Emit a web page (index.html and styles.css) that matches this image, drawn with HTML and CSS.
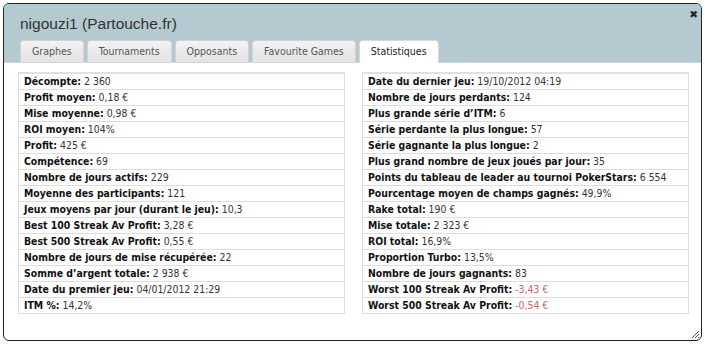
FILE: index.html
```html
<!DOCTYPE html>
<html>
<head>
<meta charset="utf-8">
<link rel="stylesheet" href="styles.css">
</head>
<body>
<div class="dialog">
  <div class="header">
    <div class="titlebar">
      <span class="title">nigouzi1 (Partouche.fr)</span>
      <span class="close">✖</span>
    </div>
    <ul class="tabs">
      <li class="tab">Graphes</li>
      <li class="tab">Tournaments</li>
      <li class="tab">Opposants</li>
      <li class="tab">Favourite Games</li>
      <li class="tab active">Statistiques</li>
    </ul>
  </div>
  <div class="panel">
    <table class="stats">
      <tr><td><b>Décompte:</b> 2 360</td></tr>
      <tr><td><b>Profit moyen:</b> 0,18 €</td></tr>
      <tr><td><b>Mise moyenne:</b> 0,98 €</td></tr>
      <tr><td><b>ROI moyen:</b> 104%</td></tr>
      <tr><td><b>Profit:</b> 425 €</td></tr>
      <tr><td><b>Compétence:</b> 69</td></tr>
      <tr><td><b>Nombre de jours actifs:</b> 229</td></tr>
      <tr><td><b>Moyenne des participants:</b> 121</td></tr>
      <tr><td><b>Jeux moyens par jour (durant le jeu):</b> 10,3</td></tr>
      <tr><td><b>Best 100 Streak Av Profit:</b> 3,28 €</td></tr>
      <tr><td><b>Best 500 Streak Av Profit:</b> 0,55 €</td></tr>
      <tr><td><b>Nombre de jours de mise récupérée:</b> 22</td></tr>
      <tr><td><b>Somme d’argent totale:</b> 2 938 €</td></tr>
      <tr><td><b>Date du premier jeu:</b> 04/01/2012 21:29</td></tr>
      <tr><td><b>ITM %:</b> 14,2%</td></tr>
    </table>
    <table class="stats">
      <tr><td><b>Date du dernier jeu:</b> 19/10/2012 04:19</td></tr>
      <tr><td><b>Nombre de jours perdants:</b> 124</td></tr>
      <tr><td><b>Plus grande série d’ITM:</b> 6</td></tr>
      <tr><td><b>Série perdante la plus longue:</b> 57</td></tr>
      <tr><td><b>Série gagnante la plus longue:</b> 2</td></tr>
      <tr><td><b>Plus grand nombre de jeux joués par jour:</b> 35</td></tr>
      <tr><td><b>Points du tableau de leader au tournoi PokerStars:</b> 6 554</td></tr>
      <tr><td><b>Pourcentage moyen de champs gagnés:</b> 49,9%</td></tr>
      <tr><td><b>Rake total:</b> 190 €</td></tr>
      <tr><td><b>Mise totale:</b> 2 323 €</td></tr>
      <tr><td><b>ROI total:</b> 16,9%</td></tr>
      <tr><td><b>Proportion Turbo:</b> 13,5%</td></tr>
      <tr><td><b>Nombre de jours gagnants:</b> 83</td></tr>
      <tr><td><b>Worst 100 Streak Av Profit:</b> <span class="neg">-3,43 €</span></td></tr>
      <tr><td><b>Worst 500 Streak Av Profit:</b> <span class="neg">-0,54 €</span></td></tr>
    </table>
  </div>
  <svg class="resize" width="9" height="9" viewBox="0 0 9 9">
    <path d="M8 1 L1 8 M8 4 L4 8 M8 7 L7 8" stroke="#555" stroke-width="1"/>
  </svg>
</div>
</body>
</html>
```

FILE: styles.css
```css
html, body {
  margin: 0;
  padding: 0;
  background: #fff;
}
body {
  padding: 3px;
  width: 699px;
}
.dialog {
  position: relative;
  width: 697px;
  height: 336px;
  border: 1px solid #222;
  border-radius: 6px;
  overflow: hidden;
  background: #fff;
  display: flex;
  flex-direction: column;
}
.header {
  background: #b5c9d0;
  padding: 0 16px;
  border-bottom: 1px solid #d4d4d4;
}
.titlebar {
  height: 36px;
  display: flex;
  align-items: flex-start;
  justify-content: space-between;
}
.title {
  font-family: "Liberation Sans", Arial, sans-serif;
  font-size: 15.5px;
  color: #333;
  margin-top: 11px;
  line-height: 18px;
}
.close {
  font-family: "DejaVu Sans", sans-serif;
  font-size: 10.5px;
  color: #222;
  margin-top: 4px;
  margin-right: -13px;
}
.tabs {
  list-style: none;
  margin: 0;
  padding: 0;
  display: flex;
  gap: 3px;
  margin-bottom: -1px;
}
.tab {
  font-family: "DejaVu Sans Condensed", "DejaVu Sans", sans-serif;
  font-size: 10.5px;
  color: #555;
  height: 21px;
  line-height: 21px;
  padding: 0 11px;
  border: 1px solid #d2d2d2;
  border-bottom: none;
  border-radius: 4px 4px 0 0;
  background: linear-gradient(#f3f3f3, #e3e3e3);
}
.tab.active {
  background: #fff;
  color: #222;
  height: 22px;
  border-color: #d8d8d8;
}
.panel {
  display: flex;
  gap: 17px;
  padding: 9px 12px 0 14px;
  align-items: flex-start;
}
.stats {
  width: 327px;
  border-collapse: collapse;
  border-top: 2px solid #e0e0e0;
  font-family: "DejaVu Sans Condensed", "DejaVu Sans", sans-serif;
  font-size: 10.4px;
  color: #333;
}
.stats td {
  height: 15px;
  line-height: 15px;
  padding: 0 5px;
  border: 1px solid #dedede;
  border-top: none;
  white-space: nowrap;
}
.stats b {
  color: #111;
}
.neg {
  color: #c26a6a;
}
.resize {
  position: absolute;
  right: 1px;
  bottom: 1px;
}
```
